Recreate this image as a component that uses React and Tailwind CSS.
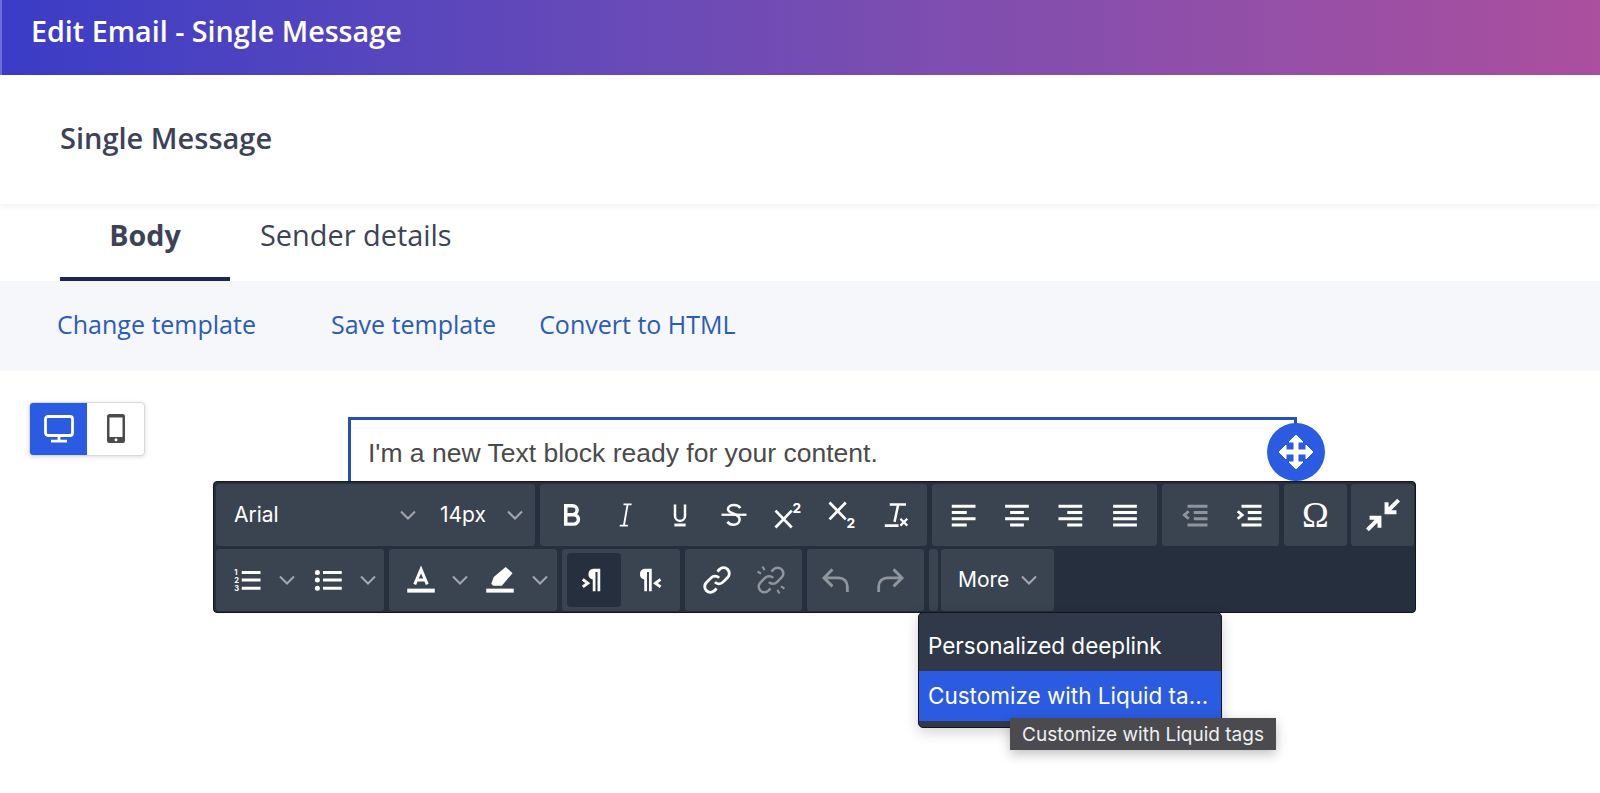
import React from "react";

const sans = "font-['Open_Sans','Lato',sans-serif]";
const ui = "font-['Inter','Liberation_Sans',sans-serif]";

function Icon({ children, dim, className = "w-[30px] h-[30px]" }) {
  return (
    <svg
      viewBox="0 0 24 24"
      fill="none"
      stroke="currentColor"
      strokeWidth="2.3"
      className={`${dim ? "text-[#8f959d]" : "text-white"} ${className}`}
    >
      {children}
    </svg>
  );
}

function Chevron() {
  return (
    <svg viewBox="0 0 18 12" fill="none" stroke="currentColor" strokeWidth="2" className="w-[18px] h-[12px] text-[#a3a8ae]">
      <path d="M2 2.5l7 7 7-7" />
    </svg>
  );
}

function Btn({ children, active }) {
  return (
    <div className="w-[54px] h-full flex items-center justify-center">
      {active ? (
        <div className="w-[54px] h-[54px] rounded bg-[#262f3d] flex items-center justify-center">{children}</div>
      ) : (
        children
      )}
    </div>
  );
}

function Group({ children, className = "" }) {
  return <div className={`h-[62px] bg-[#3a4350] rounded-[3px] flex items-center shrink-0 ${className}`}>{children}</div>;
}

function SmallText({ x, y, size = 7, children }) {
  return (
    <text x={x} y={y} fontSize={size} fontWeight="700" fill="currentColor" stroke="none" fontFamily="Inter, sans-serif">
      {children}
    </text>
  );
}

const chain = "M10.5 13.5a4 4 0 0 0 5.700 0l3.300-3.300a4 4 0 0 0-5.700-5.700l-1.500 1.500M13.500 10.500a4 4 0 0 0-5.700 0l-3.300 3.300a4 4 0 0 0 5.700 5.700l1.500-1.500";

export default function App() {
  return (
    <div className={`w-[1600px] h-[793px] overflow-hidden bg-white relative ${sans}`}>
      <header className="h-[75px] bg-gradient-to-r from-[#3a3cc6] to-[#ab4f9e] border-l-2 border-[#6f6fdc] flex items-center pl-[29px]">
        <h1 className="text-white text-[28.7px] font-semibold -mt-[13px]">Edit Email - Single Message</h1>
      </header>

      <div className="h-[129px] flex items-center pl-[60px] shadow-[0_2px_6px_rgba(30,40,70,0.07)] relative">
        <h2 className="text-[#3d4357] text-[29px] font-semibold -mt-[4px]">Single Message</h2>
      </div>

      <nav className="h-[77px] flex pl-[60px]">
        <div className="w-[170px] flex justify-center pt-[9px] border-b-4 border-[#1f2552] text-[28.700px] font-bold text-[#3d4357]">Body</div>
        <div className="pl-[30px] pt-[9px] text-[28.900px] text-[#3d4357]">Sender details</div>
      </nav>

      <div className="h-[90px] bg-[#f6f7fa] flex items-center pl-[57px] pb-[2px] text-[25px] text-[#2b5cb8]">
        <a>Change template</a>
        <a className="ml-[75px]">Save template</a>
        <a className="ml-[43px]">Convert to HTML</a>
      </div>

      <div className="relative">
        <div className="absolute left-[29px] top-[31px] flex w-[116px] h-[54px] rounded bg-white border border-[#d8d9dc] shadow-[0_1px_4px_rgba(0,0,0,0.15)] overflow-hidden">
          <div className="w-[57px] bg-[#2a5be0] flex items-center justify-center">
            <svg viewBox="0 0 30 28" className="w-[30px] h-[28px] text-white" fill="none" stroke="currentColor" strokeWidth="2.8">
              <rect x="1.5" y="1.5" width="27" height="19" rx="2.5" />
              <path d="M15 20v6M7 26.2h16" />
            </svg>
          </div>
          <div className="flex-1 flex items-center justify-center">
            <svg viewBox="0 0 18 30" className="w-[18px] h-[30px]">
              <rect x="0" y="0" width="18" height="29" rx="2.5" fill="#4c4c4c" />
              <rect x="2.5" y="3.5" width="13" height="19.5" fill="#ffffff" />
              <circle cx="9" cy="25.8" r="1.5" fill="#ffffff" />
            </svg>
          </div>
        </div>

        <div className="absolute left-[348px] top-[46px] w-[949px] h-[70px] border-[3px] border-b-0 border-[#2450b8] pl-[17px] pt-[19px] font-['Liberation_Sans',sans-serif] text-[26.5px] leading-[28px] text-[#4a4a4a]">
          I'm a new Text block ready for your content.
        </div>

        <div className="absolute left-[1267px] top-[52px] w-[58px] h-[58px] rounded-full bg-[#2a5be0] z-20 flex items-center justify-center">
          <svg viewBox="0 0 38 38" className="w-[38px] h-[38px]" fill="#ffffff" stroke="#ffffff" strokeWidth="1" strokeLinejoin="round">
            <path d="M19 2l7 7h-5v8h8v-5l7 7-7 7v-5h-8v8h5l-7 7-7-7h5v-8H9v5l-7-7 7-7v5h8V9h-5z" />
          </svg>
        </div>

        <div className={`absolute left-[213px] top-[110px] w-[1203px] h-[132px] z-10 bg-[#262f3d] border border-[#12161c] rounded-[4px] px-[2px] pt-[2px] flex flex-col gap-[3px] ${ui}`}>
          <div className="flex gap-[5px]">
            <Group className="w-[319px] text-white text-[21px]">
              <span className="ml-[18px] w-[165px]">Arial</span>
              <Chevron />
              <span className="ml-[23px] w-[66px]">14px</span>
              <Chevron />
            </Group>
            <Group className="w-[387px] pl-[5px]">
              <Btn><Icon><path strokeWidth="2.800" d="M7 4.500h5.500a3.600 3.600 0 0 1 0 7.200H7zM7 11.700h6.300a3.800 3.800 0 0 1 0 7.600H7z" /></Icon></Btn>
              <Btn><Icon><path strokeWidth="1.500" d="M10 3.500h6.500M7 20.500h6.500M13.300 3.500l-3 17" /></Icon></Btn>
              <Btn><Icon><path strokeWidth="2" d="M8 3.500v9.200a4 4 0 0 0 8 0V3.500" /><path strokeWidth="2.300" d="M7.500 20h9" /></Icon></Btn>
              <Btn><Icon><path strokeWidth="2" d="M17 6.500c-1-1.800-2.800-2.500-5-2.500-3 0-4.800 1.500-4.800 3.400 0 3.800 9.300 3 9.300 8 0 2.700-2.200 4.400-5 4.400-2 0-3.800-.8-4.800-2.400" /><path strokeWidth="1.800" d="M2 11.800h20" /></Icon></Btn>
              <Btn><Icon><path strokeWidth="2.200" d="M2 8.500l13 13.500M15 8.500L2 22" /><SmallText x="15.500" y="10" size="11">2</SmallText></Icon></Btn>
              <Btn><Icon><path strokeWidth="2.200" d="M2 2l13 13.500M15 2L2 15.500" /><SmallText x="15.500" y="22" size="11">2</SmallText></Icon></Btn>
              <Btn><Icon><path strokeWidth="2" d="M7 3.500h13M13.800 3.500l-3 14" /><path strokeWidth="2.200" d="M3 20.500h11" /><path strokeWidth="1.800" d="M15.500 15l5.500 5.500M21 15l-5.500 5.500" /></Icon></Btn>
            </Group>
            <Group className="w-[225px] pl-[4px]">
              <Btn><Icon><path d="M3 5h19M3 10h12M3 15h19M3 20h12" /></Icon></Btn>
              <Btn><Icon><path d="M2.500 5h19M6.500 10h11M2.500 15h19M6.500 20h11" /></Icon></Btn>
              <Btn><Icon><path d="M2 5h19M9 10h12M2 15h19M9 20h12" /></Icon></Btn>
              <Btn><Icon><path d="M2.500 5h19M2.500 10h19M2.500 15h19M2.500 20h19" /></Icon></Btn>
            </Group>
            <Group className="w-[117px] pl-[6px]">
              <Btn><Icon dim><path d="M6 5h16M11 10h11M11 15h11M6 20h16" /><path d="M7 9l-3.500 3L7 15" /></Icon></Btn>
              <Btn><Icon><path d="M6 5h16M11 10h11M11 15h11M6 20h16" /><path d="M3 9l3.500 3L3 15" /></Icon></Btn>
            </Group>
            <Group className="w-[63px] justify-center text-white text-[36px] font-['Liberation_Serif',serif]">Ω</Group>
            <Group className="w-[63px] -ml-[1px] justify-center">
              <Icon className="w-[34px] h-[34px]"><path strokeWidth="2.800" d="M23 1.500l-7.500 7.500M14.500 3v7h7M1 22.500L8.500 15M9.500 21v-7h-7" /></Icon>
            </Group>
          </div>

          <div className="flex gap-[5px]">
            <Group className="w-[168px] pl-[17px]">
              <Icon>
                <SmallText x="1" y="8" size="6">1</SmallText>
                <SmallText x="1" y="14.500" size="6">2</SmallText>
                <SmallText x="1" y="21" size="6">3</SmallText>
                <path strokeWidth="2.400" d="M7 6h15M7 12h15M7 18.500h15" />
              </Icon>
              <span className="ml-[15px] flex"><Chevron /></span>
              <span className="ml-[17px]"><Icon><circle cx="3.500" cy="6" r="2" fill="currentColor" stroke="none" /><circle cx="3.500" cy="12" r="2" fill="currentColor" stroke="none" /><circle cx="3.500" cy="18.500" r="2" fill="currentColor" stroke="none" /><path strokeWidth="2.400" d="M8 6h15M8 12h15M8 18.500h15" /></Icon></span>
              <span className="ml-[16px] flex"><Chevron /></span>
            </Group>
            <Group className="w-[168px] pl-[17px]">
              <Icon>
                <path strokeWidth="2.400" d="M7 15.500L12 3.500l5 12M8.500 12h7" />
                <path strokeWidth="3.200" d="M1 20.500h22" />
              </Icon>
              <span className="ml-[15px] flex"><Chevron /></span>
              <span className="ml-[16px]">
                <Icon>
                  <path fill="currentColor" stroke="none" d="M16.500 1.500l5.500 5-8.500 10H6.500L5 15l2-5.500z" />
                  <path strokeWidth="3.200" d="M1 20.500h22" />
                </Icon>
              </span>
              <span className="ml-[16px] flex"><Chevron /></span>
            </Group>
            <Group className="w-[118px] pl-[5px]">
              <Btn active>
                <Icon><path strokeWidth="2.400" d="M3 11.500l4 3-4 3" /><path fill="currentColor" stroke="none" d="M17 3v18h-2.200V5.500h-1.600V21H11v-9.500A4.300 4.300 0 0 1 11.500 3z" /></Icon>
              </Btn>
              <Btn>
                <Icon><path strokeWidth="2.400" d="M22 11.500l-4 3 4 3" /><path fill="currentColor" stroke="none" d="M15 3v18h-2.200V5.500h-1.600V21H9v-9.500A4.300 4.300 0 0 1 9.500 3z" /></Icon>
              </Btn>
            </Group>
            <Group className="w-[117px] pl-[5px]">
              <Btn><Icon className="w-[34px] h-[34px]"><path strokeWidth="2" d={chain} /></Icon></Btn>
              <Btn><Icon dim className="w-[34px] h-[34px]"><path strokeWidth="1.800" d={chain} /><path strokeWidth="1.500" d="M6 2.500l1.500 2.500M2.500 6L5 7.500M18 21.500L16.500 19M21.500 18L19 16.500" /></Icon></Btn>
            </Group>
            <Group className="w-[117px] pl-[2px]">
              <Btn><Icon dim className="w-[34px] h-[34px]"><path strokeWidth="2" d="M9.500 4.500l-6 6 6 6M3.500 10.500H14a6 6 0 0 1 6 6v4" /></Icon></Btn>
              <Btn><Icon dim className="w-[34px] h-[34px]"><path strokeWidth="2" d="M14.500 4.500l6 6-6 6M20.500 10.500H10a6 6 0 0 0-6 6v4" /></Icon></Btn>
            </Group>
            <Group className="w-[9px]" />
            <Group className="w-[113px] -ml-[2px] text-white text-[21px] pl-[17px]">
              <span className="w-[62px]">More</span>
              <Chevron />
            </Group>
          </div>
        </div>

        <div className={`absolute left-[918px] top-[241px] w-[304px] h-[116px] z-10 bg-[#2f3949] border border-[#12161c] rounded-[5px] shadow-[0_4px_14px_rgba(0,0,0,0.18)] pt-[11px] text-white text-[22.5px] ${ui}`}>
          <div className="h-[47px] pl-[9px] pb-[3px] flex items-center">Personalized deeplink</div>
          <div className="h-[50px] pl-[9px] flex items-center bg-[#2a5be0] whitespace-nowrap">Customize with Liquid ta...</div>
        </div>

        <div className={`absolute left-[1010px] top-[347px] w-[266px] h-[32px] pt-[2px] z-20 bg-[#4a4a4f] shadow-[0_4px_12px_rgba(0,0,0,0.25)] flex items-center justify-center text-[#f0f0f0] text-[19px] ${ui}`}>
          Customize with Liquid tags
        </div>
      </div>
    </div>
  );
}
